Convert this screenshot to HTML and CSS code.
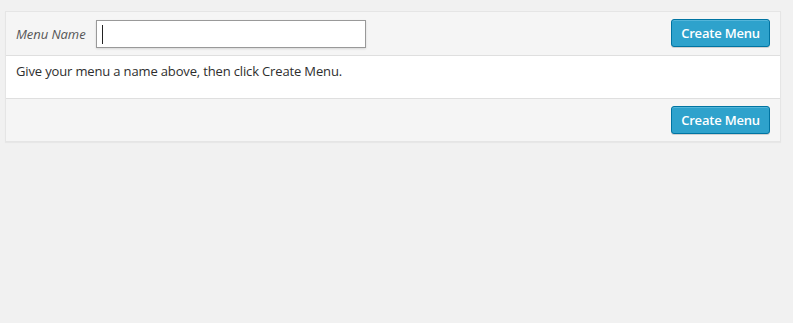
FILE: index.html
```html
<!DOCTYPE html>
<html lang="en">
<head>
<meta charset="utf-8">
<title>Menus</title>
<link rel="stylesheet" href="styles.css">
</head>
<body>
<form class="menu-edit">
  <div class="menu-header">
    <label class="menu-name-label" for="menu-name">Menu Name</label>
    <span class="input-wrap">
      <input type="text" id="menu-name" class="menu-name">
      <span class="caret"></span>
    </span>
    <button type="button" class="button-primary">Create Menu</button>
  </div>
  <div class="menu-body">
    <p class="menu-hint">Give your menu a name above, then click Create Menu.</p>
  </div>
  <div class="menu-footer">
    <button type="button" class="button-primary">Create Menu</button>
  </div>
</form>
</body>
</html>
```
FILE: styles.css
```css
html, body {
  margin: 0;
  padding: 0;
}
body {
  background: #f1f1f1;
  font-family: "Open Sans", "Noto Sans", sans-serif;
  font-size: 13px;
  color: #444;
  padding: 11px 12px 0 5px;
  min-height: 323px;
  box-sizing: border-box;
}
.menu-edit {
  margin: 0;
  border: 1px solid #e5e5e5;
  box-shadow: 0 1px 1px rgba(0, 0, 0, 0.04);
}
.menu-header {
  display: flex;
  align-items: flex-start;
  background: #f5f5f5;
  border-bottom: 1px solid #dfdfdf;
  padding: 7px 10px 7px 10px;
}
.menu-name-label {
  font-style: italic;
  color: #555;
  line-height: 28px;
  margin-top: 1px;
  margin-right: 10px;
  letter-spacing: -0.05px;
}
.input-wrap {
  position: relative;
  display: block;
  margin-top: 1px;
}
.menu-name {
  display: block;
  width: 270px;
  height: 28px;
  box-sizing: border-box;
  margin: 0;
  border: 1px solid #999;
  border-radius: 0;
  background: #fff;
  box-shadow: 0 1px 2px rgba(0, 0, 0, 0.12);
  font: inherit;
  padding: 0 6px;
  outline: none;
}
.caret {
  position: absolute;
  left: 6px;
  top: 5px;
  width: 1px;
  height: 19px;
  background: #222;
}
.button-primary {
  margin-left: auto;
  display: block;
  width: 99px;
  height: 28px;
  box-sizing: border-box;
  padding: 0 0 1px;
  font-family: "Open Sans", "Noto Sans", sans-serif;
  font-size: 13px;
  font-weight: 600;
  letter-spacing: -0.2px;
  line-height: 26px;
  color: #fff;
  background: #2ea2cc;
  border: 1px solid #0074a2;
  border-radius: 3px;
  box-shadow: inset 0 1px 0 rgba(120, 200, 230, 0.5), 0 1px 0 rgba(0, 0, 0, 0.15);
  cursor: pointer;
}
.menu-body {
  background: #fff;
  padding: 6px 10px 18px;
}
.menu-hint {
  margin: 0;
  line-height: 18px;
  color: #2e2e2e;
  letter-spacing: -0.15px;
}
.menu-footer {
  display: flex;
  background: #f5f5f5;
  border-top: 1px solid #dfdfdf;
  padding: 7px 10px;
}
```
